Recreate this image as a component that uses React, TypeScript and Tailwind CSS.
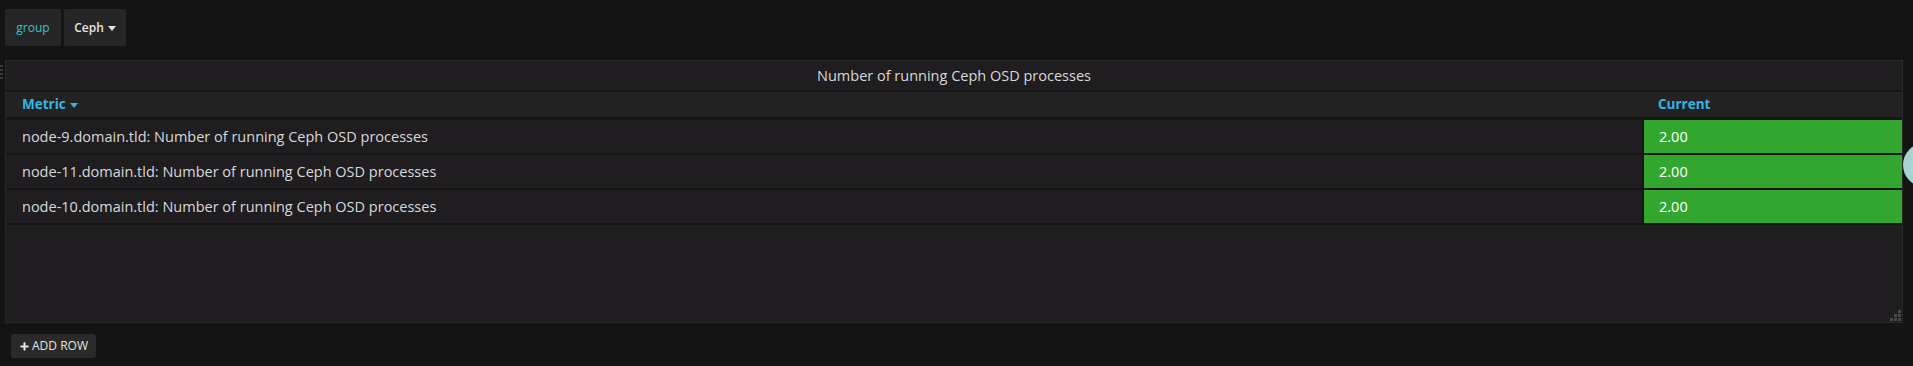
import { Plus } from "lucide-react";

const ROWS = [
  { host: "node-9.domain.tld", value: "2.00" },
  { host: "node-11.domain.tld", value: "2.00" },
  { host: "node-10.domain.tld", value: "2.00" },
];

function Caret({ className }: { className?: string }) {
  return (
    <svg width="8" height="5" viewBox="0 0 8 5" className={className}>
      <path d="M0 0h8L4 5z" fill="currentColor" />
    </svg>
  );
}

export default function App() {
  return (
    <div className="relative h-[366px] w-[1913px] overflow-hidden bg-[#141414] font-['Open_Sans',sans-serif] text-[#d8d9da]">
      {/* template variables */}
      <div className="flex gap-[3px] pl-[5px] pt-[9px]">
        <div className="flex h-[37px] w-[56px] items-center justify-center rounded-[2px] bg-[#262626] text-[12px] text-[#35c2c8]">
          group
        </div>
        <div className="flex h-[37px] w-[62px] items-center justify-center gap-[4px] rounded-[2px] bg-[#262626] text-[12px] font-semibold text-[#e4e4e4]">
          Ceph
          <Caret className="mt-[1px]" />
        </div>
      </div>

      {/* panel */}
      <div className="relative ml-[5px] mt-[14px] flex h-[263px] w-[1898px] flex-col border border-[#292929] bg-[#1f1d1f]">
        <div className="flex h-[29px] items-center justify-center text-[14.5px] font-medium text-[#d8d9da]">
          Number of running Ceph OSD processes
        </div>
        <div className="h-[2px] bg-[#161516]" />
        <div className="flex h-[25px] items-center bg-[#232223] text-[13.5px] font-bold text-[#33b5e5]">
          <div className="flex flex-1 items-center gap-[4px] pl-[16px]">
            Metric
            <Caret className="mt-[1px]" />
          </div>
          <div className="w-[259px] pl-[15px]">Current</div>
        </div>
        <div className="h-[3px] bg-[#161516]" />
        {ROWS.map((r) => (
          <div key={r.host} className="flex h-[35px] border-b-2 border-[#161516] text-[14.5px]">
            <div className="flex flex-1 items-center pl-[16px]">
              {r.host}: Number of running Ceph OSD processes
            </div>
            <div className="w-[2px] bg-[#161516]" />
            <div className="flex w-[258px] items-center bg-[#32a62e] pl-[15px] text-white">
              {r.value}
            </div>
          </div>
        ))}

        {/* resize handle */}
        <svg width="11" height="11" viewBox="0 0 11 11" className="absolute bottom-[1px] right-[1px]">
          {[
            [8, 0],
            [4, 4],
            [8, 4],
            [0, 8],
            [4, 8],
            [8, 8],
          ].map(([x, y]) => (
            <rect key={`${x}-${y}`} x={x} y={y} width="3" height="3" fill="#4a4a4a" />
          ))}
        </svg>
      </div>

      {/* drag handle on left edge */}
      <div className="absolute left-0 top-[65px] flex flex-col gap-[2px]">
        {[0, 1, 2, 3].map((i) => (
          <div key={i} className="h-[2px] w-[3px] bg-[#3a3a3a]" />
        ))}
      </div>

      {/* partially visible bubble at the right edge */}
      <div className="absolute left-[1903px] top-[143px] h-[44px] w-[44px] rounded-full bg-[#a9d3d3]" />

      <div className="ml-[11px] mt-[11px] flex h-[24px] w-[85px] items-center justify-center gap-[2px] rounded-[3px] bg-[#2a2a2a] text-[12px] text-[#e4e4e4]">
        <Plus size={11} strokeWidth={4.5} />
        ADD ROW
      </div>
    </div>
  );
}
